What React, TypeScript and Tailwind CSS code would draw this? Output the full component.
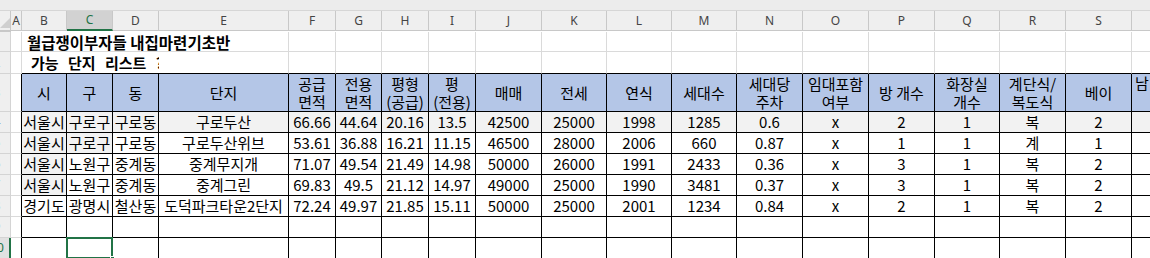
import React from "react";

const GRID =
  "grid grid-cols-[11px_11px_45px_46px_46px_130px_47px_46px_47px_47px_66px_65px_65px_65px_66px_66px_66px_65px_66px_66px_60px]";

const LETTERS = "ABCDEFGHIJKLMNOPQRST".split("");

const HEAD = [
  "시",
  "구",
  "동",
  "단지",
  "공급\n면적",
  "전용\n면적",
  "평형\n(공급)",
  "평\n(전용)",
  "매매",
  "전세",
  "연식",
  "세대수",
  "세대당\n주차",
  "임대포함\n여부",
  "방 개수",
  "화장실\n개수",
  "계단식/\n복도식",
  "베이",
];

const DATA = [
  ["서울시", "구로구", "구로동", "구로두산", "66.66", "44.64", "20.16", "13.5", "42500", "25000", "1998", "1285", "0.6", "x", "2", "1", "복", "2", ""],
  ["서울시", "구로구", "구로동", "구로두산위브", "53.61", "36.88", "16.21", "11.15", "46500", "28000", "2006", "660", "0.87", "x", "1", "1", "계", "1", ""],
  ["서울시", "노원구", "중계동", "중계무지개", "71.07", "49.54", "21.49", "14.98", "50000", "26000", "1991", "2433", "0.36", "x", "3", "1", "복", "2", ""],
  ["서울시", "노원구", "중계동", "중계그린", "69.83", "49.5", "21.12", "14.97", "49000", "25000", "1990", "3481", "0.37", "x", "3", "1", "복", "2", ""],
  ["경기도", "광명시", "철산동", "도덕파크타운2단지", "72.24", "49.97", "21.85", "15.11", "50000", "25000", "2001", "1234", "0.84", "x", "2", "1", "복", "2", ""],
  ["", "", "", "", "", "", "", "", "", "", "", "", "", "", "", "", "", "", ""],
  ["", "", "", "", "", "", "", "", "", "", "", "", "", "", "", "", "", "", ""],
];

// cells with the light grey fill (row index - column index)
const GREY = new Set(["1-0", "2-0", "3-0", "1-1"]);

function RowHead({ n, selected }: { n: number; selected?: boolean }) {
  return (
    <div
      className={
        selected
          ? "overflow-hidden bg-[#e1e1e1] border-b border-[#d4d4d4] border-r-2 border-r-[#217346] text-[#217346] text-[12px] flex items-center"
          : "overflow-hidden bg-[#efefef] border-b border-r border-[#d4d4d4] text-[#444] text-[12px] flex items-center"
      }
    >
      <span className="block w-[26px] shrink-0 -ml-[16px] text-center font-['Noto_Sans',sans-serif]">{n}</span>
    </div>
  );
}

export default function App() {
  return (
    <div className="w-[1150px] h-[258px] overflow-hidden bg-white font-['Noto_Sans_CJK_KR','Noto_Sans',sans-serif] text-black">
      {/* formula bar edge */}
      <div className="h-[11px] bg-[#ececec] border-b border-[#d6d6d6]" />

      {/* column letters */}
      <div className={`${GRID} h-[21px]`}>
        <div className="bg-[#efefef] border-r border-b border-[#c8c8c8] relative">
          <svg className="absolute left-0 bottom-[2px]" width="10" height="10" viewBox="0 0 10 10">
            <polygon points="0,10 10,0 10,10" fill="#cfcfcf" />
          </svg>
        </div>
        {LETTERS.map((l) =>
          l === "C" ? (
            <div
              key={l}
              className="bg-[#d2d2d2] border-r border-[#c8c8c8] border-b-2 border-b-[#217346] text-[#217346] text-[12px] flex items-center justify-center font-['Noto_Sans',sans-serif]"
            >
              {l}
            </div>
          ) : (
            <div
              key={l}
              className="bg-[#efefef] border-r border-b border-[#c8c8c8] text-[#444] text-[12px] flex items-center justify-center font-['Noto_Sans',sans-serif]"
            >
              {l}
            </div>
          )
        )}
        <div className="bg-[#efefef] border-b border-[#c8c8c8]" />
      </div>

      {/* row 1 - title */}
      <div className={`${GRID} h-[20px]`}>
        <RowHead n={1} />
        <div className="border-r border-b border-[#dadada]" />
        <div className="col-span-4 border-r border-b border-[#dadada] flex items-center pl-[5px] text-[15.5px] leading-[18px] font-bold whitespace-nowrap">
          월급쟁이부자들 내집마련기초반
        </div>
        {LETTERS.slice(5).map((l) => (
          <div key={l} className="border-r border-b border-[#dadada]" />
        ))}
      </div>

      {/* row 2 - subtitle */}
      <div className={`${GRID} h-[22px]`}>
        <RowHead n={2} />
        <div className="border-r border-b border-[#dadada]" />
        <div className="col-span-3 overflow-hidden border-b border-b-black flex items-center pl-[9px] text-[15px] leading-[18px] font-bold whitespace-nowrap [word-spacing:6px]">
          가능 단지 리스트 ?
        </div>
        {LETTERS.slice(4).map((l) => (
          <div key={l} className="border-r border-r-[#dadada] border-b border-b-black" />
        ))}
      </div>

      {/* row 3 - table header */}
      <div className={`${GRID} h-[38px]`}>
        <RowHead n={3} />
        <div className="border-r border-r-black border-b border-b-[#dadada]" />
        {HEAD.map((h) => (
          <div
            key={h}
            className="bg-[#b4c6e7] border-r border-b border-black flex items-center justify-center text-center text-[15px] leading-[18px] whitespace-pre"
          >
            {h}
          </div>
        ))}
        <div className="bg-[#b4c6e7] border-b border-black pl-[3px] text-[15px] leading-[17px]">남</div>
      </div>

      {/* data rows */}
      {DATA.map((row, r) => (
        <div key={r} className={`${GRID} h-[21px]`}>
          <RowHead n={r + 4} selected={r === 6} />
          <div className="border-r border-r-black border-b border-b-[#dadada]" />
          {row.map((v, c) =>
            r === 6 && c === 1 ? (
              <div key={c} className="relative border-r border-b border-black">
                <div className="absolute -inset-px border-2 border-[#217346]" />
                <div className="absolute -right-[3px] bottom-[-3px] w-[5px] h-[5px] bg-[#217346] border border-white" />
              </div>
            ) : (
              <div
                key={c}
                className={`${
                  r === 0 || GREY.has(`${r}-${c}`) ? "bg-[#f2f2f2]" : "bg-white"
                } border-r border-b border-black flex items-center justify-center text-[15px] whitespace-nowrap overflow-hidden`}
              >
                {v}
              </div>
            )
          )}
        </div>
      ))}
    </div>
  );
}
